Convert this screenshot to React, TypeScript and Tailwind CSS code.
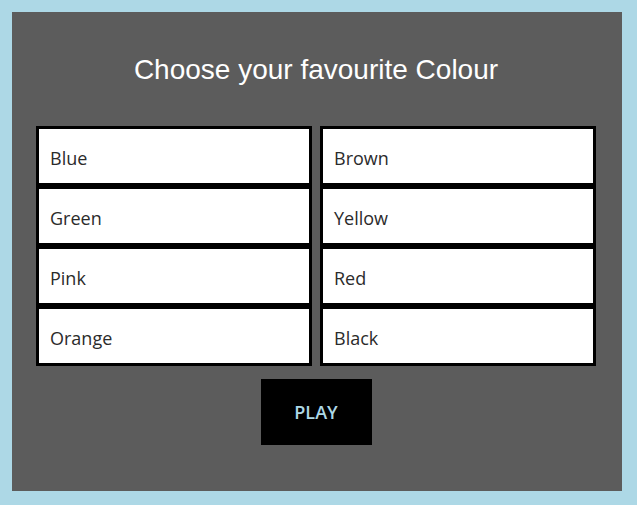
import React from 'react';

const colours = ['Blue', 'Brown', 'Green', 'Yellow', 'Pink', 'Red', 'Orange', 'Black'];

export default function App() {
  return (
    <div className="w-[637px] h-[505px] bg-[#add8e6] p-3">
      <div className="h-[479px] w-[610px] bg-[#5c5c5c] pt-[43px] pl-[24px] pr-[26px] flex flex-col items-center">
        <h1
          className="text-[28px] leading-[30px] text-white"
          style={{ fontFamily: '"Liberation Sans", Arial, sans-serif' }}
        >
          Choose your favourite Colour
        </h1>
        <div
          className="mt-[41px] w-[560px] grid grid-cols-2 gap-x-2"
          style={{ fontFamily: '"Open Sans", "Noto Sans", sans-serif' }}
        >
          {colours.map((c) => (
            <div
              key={c}
              className="h-[60px] bg-white border-[3px] border-black pl-[11px] pt-1 flex items-center text-[18px] text-[#2b2b2b]"
            >
              {c}
            </div>
          ))}
        </div>
        <button
          className="mt-[13px] w-[111px] h-[66px] bg-black text-[#add8e6] text-[18px] font-semibold"
          style={{ fontFamily: '"Open Sans", "Noto Sans", sans-serif' }}
        >
          PLAY
        </button>
      </div>
    </div>
  );
}
